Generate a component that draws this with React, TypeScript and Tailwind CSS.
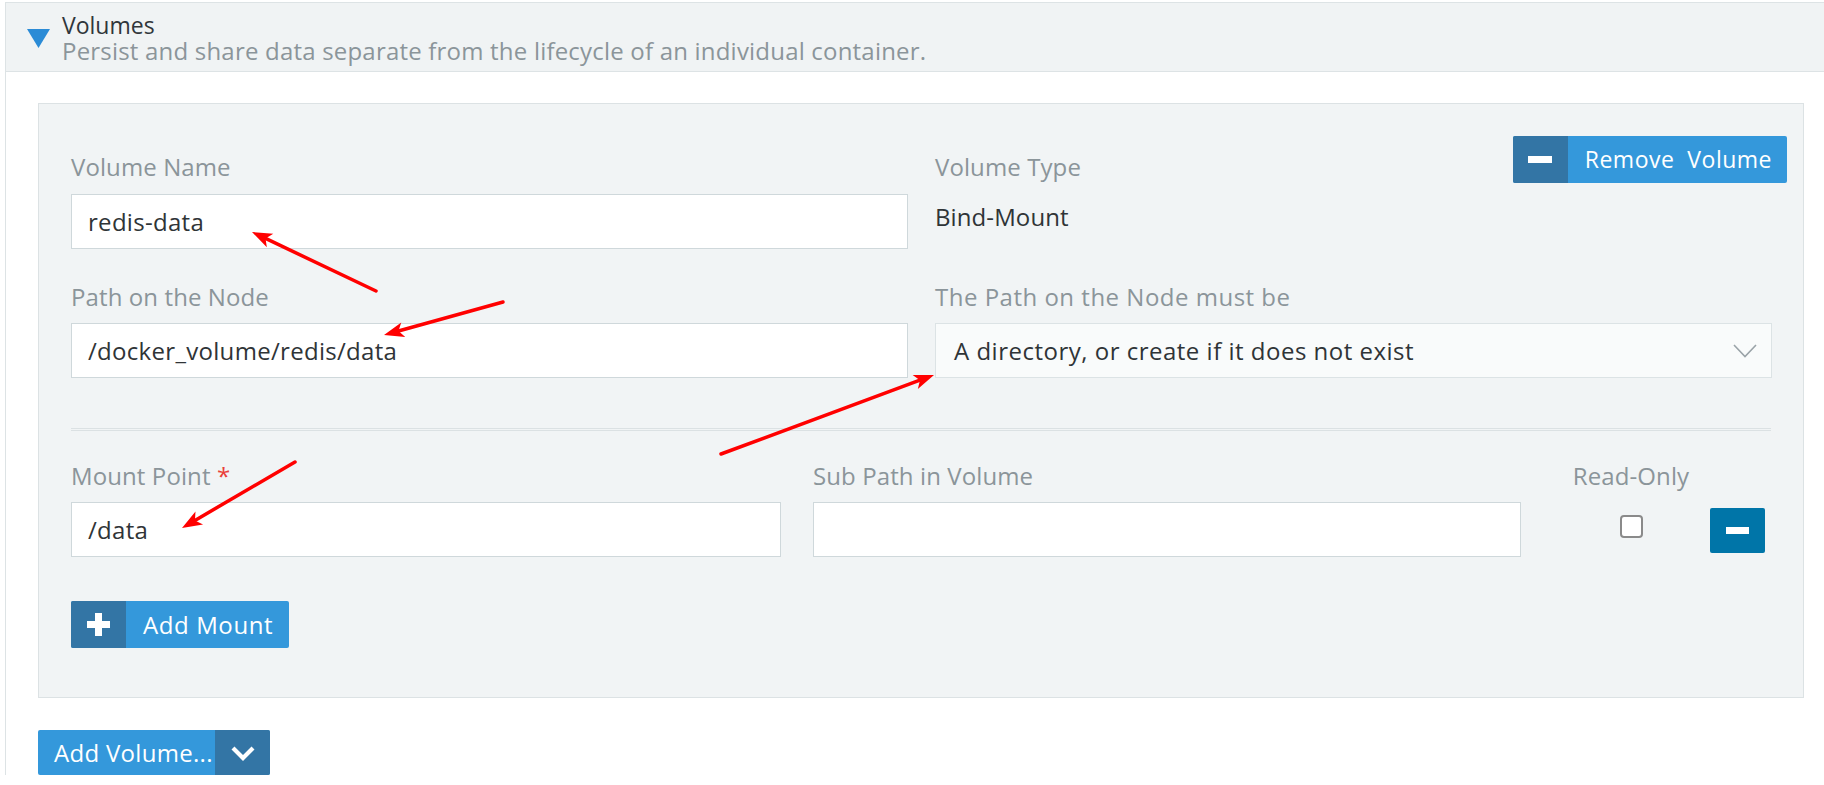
import React from "react";

function Arrow({ x1, y1, x2, y2 }: { x1: number; y1: number; x2: number; y2: number }) {
  const dx = x2 - x1;
  const dy = y2 - y1;
  const len = Math.hypot(dx, dy);
  const ux = dx / len;
  const uy = dy / len;
  const hl = 20;
  const hw = 7.5;
  const bx = x2 - ux * hl;
  const by = y2 - uy * hl;
  const nx = x2 - ux * (hl - 5);
  const ny = y2 - uy * (hl - 5);
  const px = -uy;
  const py = ux;
  const pts = `${x2},${y2} ${bx + px * hw},${by + py * hw} ${nx},${ny} ${bx - px * hw},${by - py * hw}`;
  return (
    <g>
      <line x1={x1} y1={y1} x2={nx} y2={ny} stroke="#ff0000" strokeWidth={3.5} strokeLinecap="round" />
      <polygon points={pts} fill="#ff0000" />
    </g>
  );
}

function Label({ children }: { children: React.ReactNode }) {
  return <div className="text-[24px] leading-[32px] tracking-[0.1px] text-[#8b959a] whitespace-nowrap">{children}</div>;
}

function TextInput({ value, className = "" }: { value: string; className?: string }) {
  return (
    <div
      className={`h-[55px] bg-white border border-[#cfd8db] pl-[16px] flex items-center text-[24px] leading-[32px] tracking-[0.3px] text-[#2f3437] ${className}`}
    >
      <span className="pt-[1px]">{value}</span>
    </div>
  );
}

function MinusBar({ w = 24, h = 7 }: { w?: number; h?: number }) {
  return <div className="bg-white" style={{ width: w, height: h }} />;
}

export default function App() {
  return (
    <div className="relative w-full h-[785px] overflow-hidden bg-white font-['Open_Sans',sans-serif]">
      <div className="ml-[5px] mt-[2px] border-l border-t border-[#dde3e5]">
        {/* Header */}
        <div className="h-[69px] bg-[#f0f3f4] border-b border-[#dde3e5] flex items-start pl-[21px]">
          <svg width="23" height="19" viewBox="0 0 23 19" className="mt-[26px] shrink-0">
            <polygon points="0,0 23,0 11.5,19" fill="#2b8bd6" />
          </svg>
          <div className="ml-[12px] pt-[10px]">
            <div className="text-[23px] leading-[25px] text-[#30363a]">Volumes</div>
            <div className="text-[24px] leading-[25px] tracking-[0.2px] text-[#8b959a] whitespace-nowrap">
              Persist and share data separate from the lifecycle of an individual container.
            </div>
          </div>
        </div>

        {/* Body */}
        <div className="pl-[32px] pr-[20px] pt-[31px]">
          <div className="bg-[#f1f4f5] border border-[#dce2e4] px-[32px] pt-[32px] pb-[49px]">
            {/* Row 1 */}
            <div className="grid grid-cols-[837px_837px] gap-x-[27px]">
              <div className="pt-[15px]">
                <Label>Volume Name</Label>
                <TextInput value="redis-data" className="mt-[11px]" />
              </div>
              <div className="flex items-start justify-between">
                <div className="pt-[15px]">
                  <Label>Volume Type</Label>
                  <div className="mt-[11px] h-[55px] pt-[7px] text-[24px] leading-[32px] tracking-[0.1px] text-[#2f3437]">Bind-Mount</div>
                </div>
                <button className="h-[47px] -mr-[15px] flex items-stretch rounded-[2px] overflow-hidden bg-[#3498db] text-white">
                  <span className="w-[55px] bg-[#3375a5] flex items-center justify-center">
                    <MinusBar w={24} h={7} />
                  </span>
                  <span className="pl-[17px] pr-[15px] flex items-center text-[23px] tracking-[0.5px] whitespace-nowrap">
                    Remove&nbsp; Volume
                  </span>
                </button>
              </div>
            </div>

            {/* Row 2 */}
            <div className="grid grid-cols-[837px_837px] gap-x-[27px] mt-[32px]">
              <div>
                <Label>Path on the Node</Label>
                <TextInput value="/docker_volume/redis/data" className="mt-[10px]" />
              </div>
              <div>
                <Label>
                  <span className="tracking-[0.5px]">The Path on the Node must be</span>
                </Label>
                <div className="mt-[10px] h-[55px] bg-[#f9fbfb] border border-[#dce3e5] pl-[18px] pr-[14px] flex items-center justify-between text-[24px] leading-[32px] tracking-[0.5px] text-[#2f3437]">
                  <span className="pt-[1px]">A directory, or create if it does not exist</span>
                  <svg width="24" height="14" viewBox="0 0 24 14">
                    <polyline points="1,1 12,12.5 23,1" fill="none" stroke="#9aa3a8" strokeWidth="1.6" />
                  </svg>
                </div>
              </div>
            </div>

            {/* Divider */}
            <div className="mt-[50px] border-t-[3px] border-double border-[#dbe1e3]" />

            {/* Row 3 */}
            <div className="flex items-start mt-[29px]">
              <div className="w-[710px] shrink-0">
                <Label>
                  Mount Point <span className="text-[#e9403a]">*</span>
                </Label>
                <TextInput value="/data" className="mt-[10px]" />
              </div>
              <div className="w-[708px] shrink-0 ml-[32px]">
                <Label>Sub Path in Volume</Label>
                <TextInput value="" className="mt-[10px]" />
              </div>
              <div className="w-[156px] shrink-0 ml-[32px] flex flex-col items-center">
                <Label>Read-Only</Label>
                <div className="mt-[10px] h-[55px] flex items-start pt-[13px]">
                  <div className="w-[23px] h-[23px] rounded-[4px] border-2 border-[#8a8a8a] bg-white" />
                </div>
              </div>
              <div className="ml-[1px] pt-[48px]">
                <button className="w-[55px] h-[45px] rounded-[2px] bg-[#0075a8] flex items-center justify-center">
                  <MinusBar w={23} h={7} />
                </button>
              </div>
            </div>

            {/* Add Mount */}
            <button className="mt-[44px] h-[47px] flex items-stretch rounded-[2px] overflow-hidden bg-[#3498db] text-white">
              <span className="w-[55px] bg-[#3375a5] flex items-center justify-center">
                <svg width="23" height="23" viewBox="0 0 23 23">
                  <rect x="8" y="0" width="7" height="23" fill="#fff" />
                  <rect x="0" y="8" width="23" height="7" fill="#fff" />
                </svg>
              </span>
              <span className="pl-[17px] pr-[16px] flex items-center text-[24px] tracking-[0.6px] whitespace-nowrap">Add Mount</span>
            </button>
          </div>

          {/* Add Volume */}
          <div className="mt-[32px] flex">
            <button className="h-[45px] flex items-stretch rounded-[2px] overflow-hidden bg-[#3498db] text-white">
              <span className="w-[177px] pl-[16px] flex items-center text-[24px] tracking-[0.3px] whitespace-nowrap overflow-hidden">
                Add Volume...
              </span>
              <span className="w-[55px] bg-[#3375a5] flex items-center justify-center">
                <svg width="24" height="16" viewBox="0 0 24 16">
                  <polyline points="2,3 12,13 22,3" fill="none" stroke="#fff" strokeWidth="4.2" />
                </svg>
              </span>
            </button>
          </div>
        </div>
      </div>

      {/* Annotation arrows */}
      <svg className="absolute left-0 top-0 pointer-events-none" width="1824" height="785">
        <Arrow x1={376} y1={291} x2={252} y2={232} />
        <Arrow x1={503} y1={302} x2={384} y2={335} />
        <Arrow x1={721} y1={454} x2={934} y2={375} />
        <Arrow x1={295} y1={462} x2={182} y2={528} />
      </svg>
    </div>
  );
}
